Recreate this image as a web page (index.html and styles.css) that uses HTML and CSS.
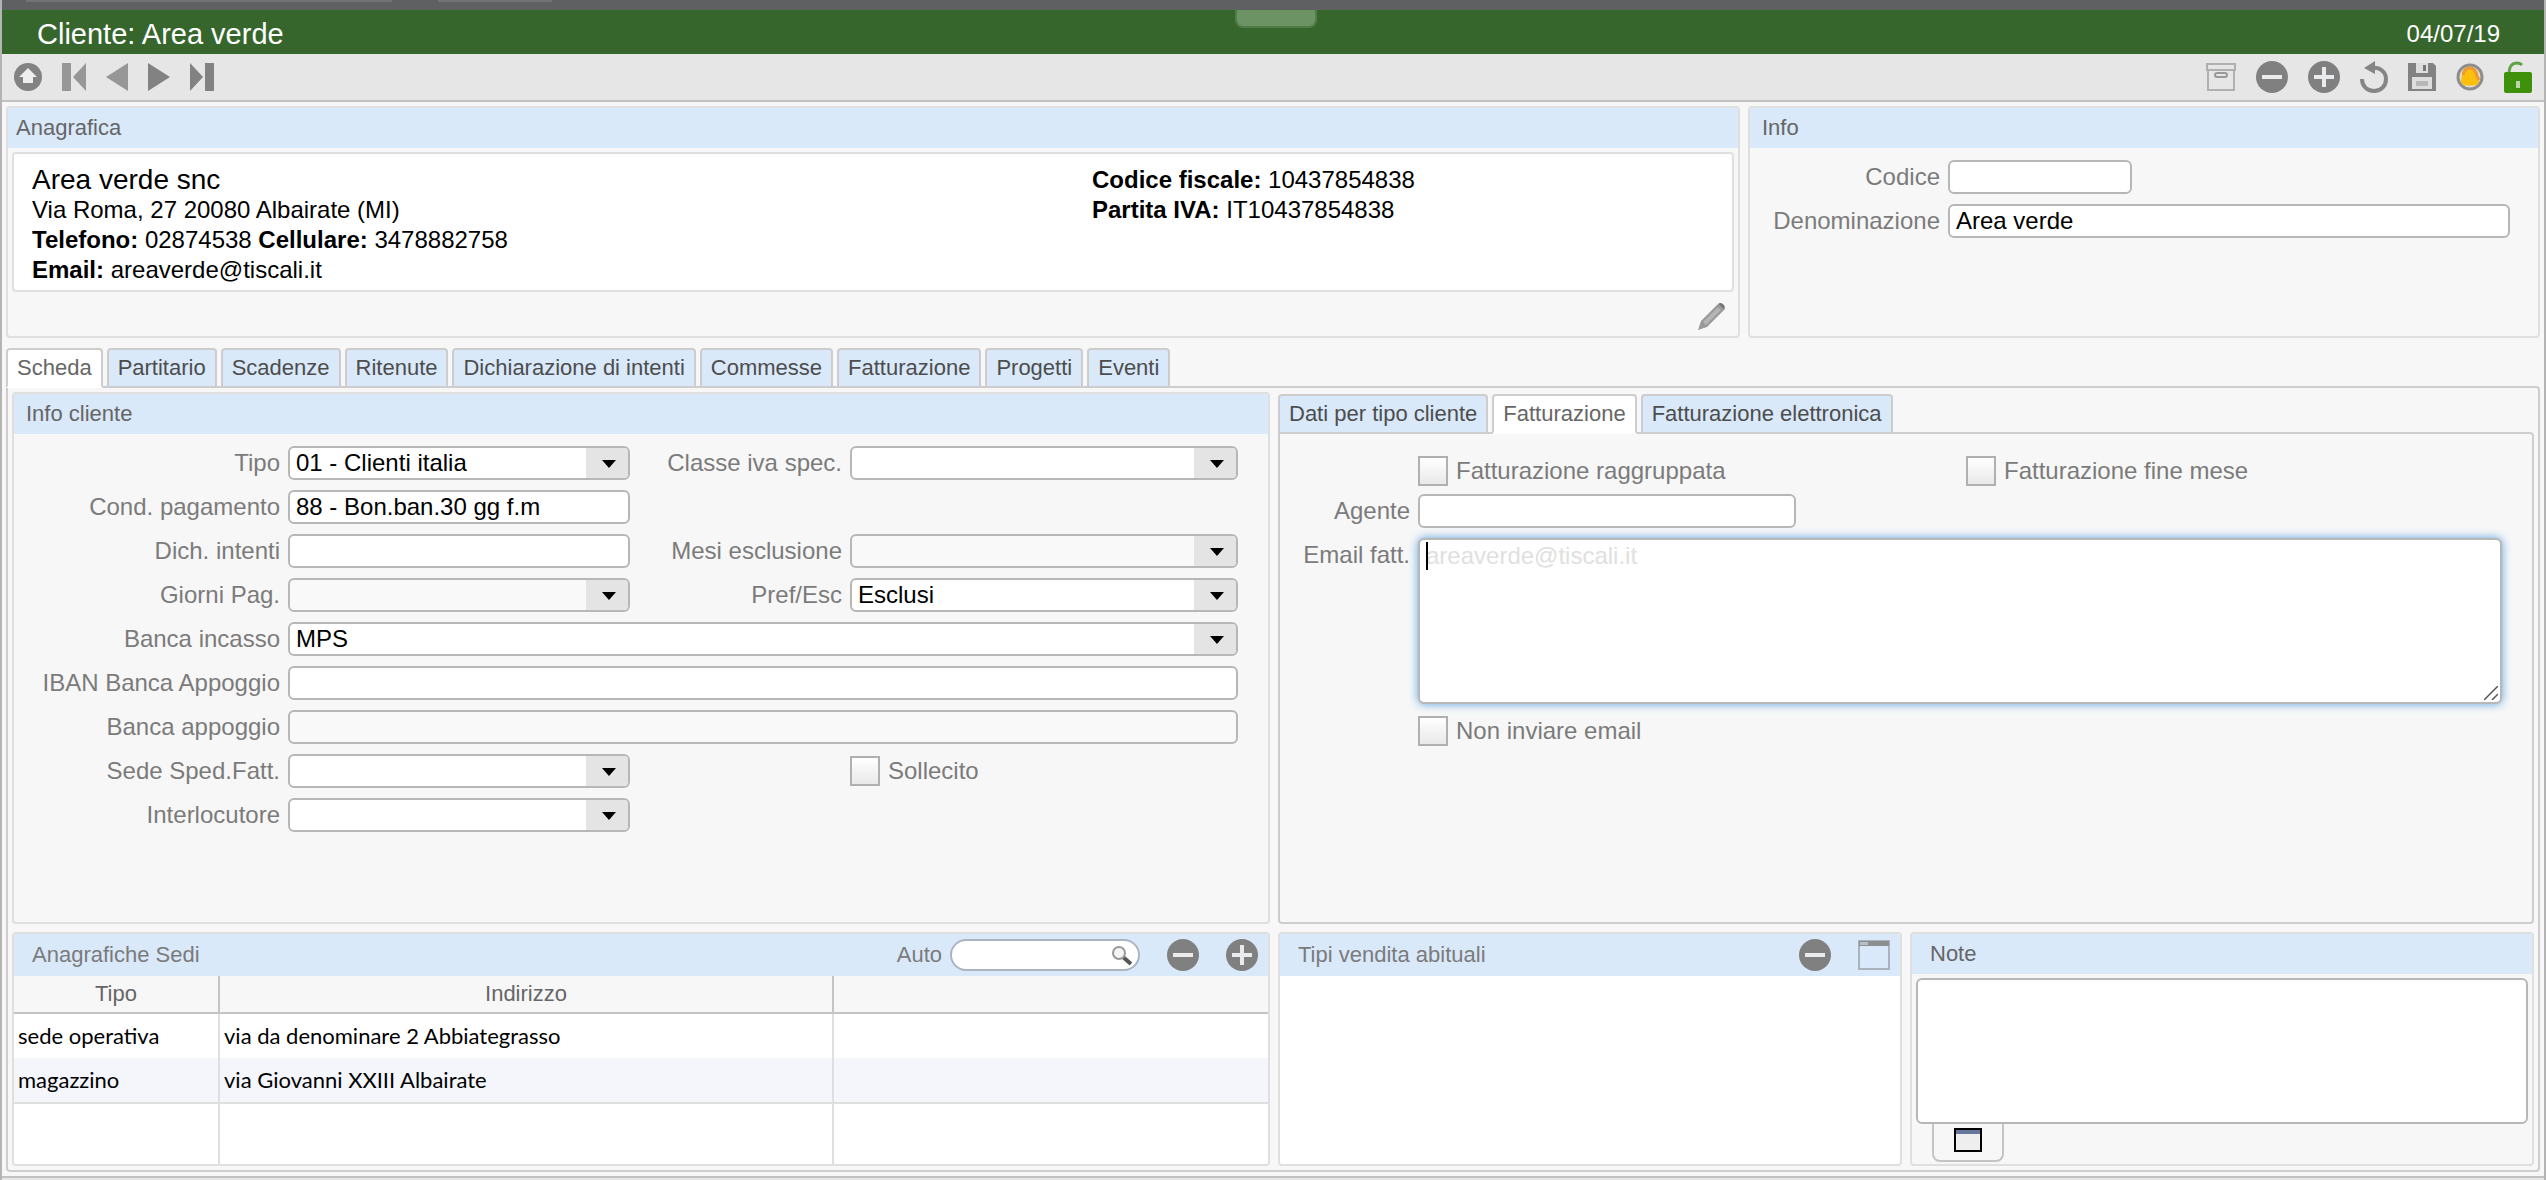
FILE: index.html
```html
<!DOCTYPE html>
<html lang="it">
<head>
    <meta charset="UTF-8">
    <meta name="viewport" content="width=device-width, initial-scale=1.0">
    <title>Cliente: Area verde</title>
    <link rel="stylesheet" href="styles.css">
</head>
<body>
    <!-- simboli riutilizzati -->
    <svg class="symbols" aria-hidden="true">
        <symbol id="minus" viewBox="0 0 32 32">
            <circle cx="16" cy="16" r="16" fill="#808080"/>
            <path d="M6 14h20v4H6z" fill="#e8eaec"/>
        </symbol>
        <symbol id="plus" viewBox="0 0 32 32">
            <circle cx="16" cy="16" r="16" fill="#808080"/>
            <path d="M6 14h8V6h4v8h8v4h-8v8h-4v-8H6z" fill="#e8eaec"/>
        </symbol>
    </svg>

    <div class="strip"><span></span><span></span></div>
    <header class="title-bar">
        <h1>Cliente: Area verde</h1>
        <span class="notch"></span>
        <span class="date">04/07/19</span>
    </header>

    <nav class="toolbar">
        <button aria-label="Su"><svg width="28" height="28" viewBox="0 0 28 28"><circle cx="14" cy="14" r="14" fill="#828282"/><path d="M14 5l9 9h-4v6H9v-6H5z" fill="#eee"/></svg></button>
        <button aria-label="Primo"><svg width="24" height="28" viewBox="0 0 24 28" fill="#979797"><path d="M0 0h9v28H0zM24 0v28L11 14z"/></svg></button>
        <button aria-label="Precedente"><svg width="22" height="28" viewBox="0 0 22 28" fill="#979797"><path d="M22 0v28L0 14z"/></svg></button>
        <button aria-label="Successivo"><svg width="22" height="28" viewBox="0 0 22 28" fill="#828282"><path d="M0 0l22 14L0 28z"/></svg></button>
        <button aria-label="Ultimo"><svg width="24" height="28" viewBox="0 0 24 28" fill="#828282"><path d="M15 0h9v28h-9zM0 0l13 14L0 28z"/></svg></button>
        <div class="actions">
            <button aria-label="Archivia"><svg width="30" height="30" viewBox="0 0 30 30" fill="none" stroke="#b0b0b0" stroke-width="2"><path d="M1 2h28v6H1zM2 8v20h26V8"/><rect x="9" y="11" width="12" height="4" rx="2" stroke="#999"/></svg></button>
            <button aria-label="Elimina"><svg width="32" height="32"><use href="#minus"/></svg></button>
            <button aria-label="Nuovo"><svg width="32" height="32"><use href="#plus"/></svg></button>
            <button aria-label="Annulla"><svg width="28" height="32" viewBox="0 0 28 32"><path d="M12 7c8-1 14 4 14 11s-5 12-12 12S2 25 2 18" fill="none" stroke="#858585" stroke-width="4"/><path d="M4 7l11-7v13z" fill="#858585"/></svg></button>
            <button aria-label="Salva"><svg width="28" height="28" viewBox="0 0 28 28"><path d="M0 0h25l3 3v25H0z" fill="#828282"/><path d="M8 0h12v10H8zM4 14h20v12H4z" fill="#dedede"/><path d="M8 18h12v5H8z" fill="#b8b8b8"/><path d="M15 2h3v6h-3z" fill="#777"/></svg></button>
            <button aria-label="Notifiche"><svg width="28" height="28" viewBox="0 0 28 28"><circle cx="14" cy="14" r="12" fill="#e6dccb" stroke="#8e8e8e" stroke-width="3"/><path d="M6 21c-2-3 0-6 0-10 1-5 4-7 8-7s7 3 8 7c0 4 2 7 0 10-2 2-14 2-16 0z" fill="#fbbf0c"/><path d="M7 12c1-5 3-7 7-7s6 3 7 8l2 4" fill="none" stroke="#ec9a35" stroke-width="3"/></svg></button>
            <button aria-label="Sblocca"><svg width="28" height="32" viewBox="0 0 28 32"><path d="M5 12c0-6 3-10 8-10 2 0 4 1 5 2" fill="none" stroke="#5fa345" stroke-width="3"/><rect y="11" width="28" height="21" rx="2" fill="#3f900a"/><path d="M12 20h4v7h-4z" fill="#b9d7a8"/></svg></button>
        </div>
    </nav>

    <main>
        <div class="top-row">
            <section class="panel registry">
                <h2>Anagrafica</h2>
                <div class="card">
                    <div>
                        <p class="name">Area verde snc</p>
                        <p>Via Roma, 27 20080 Albairate (MI)</p>
                        <p><b>Telefono:</b> 02874538 <b>Cellulare:</b> 3478882758</p>
                        <p><b>Email:</b> areaverde@tiscali.it</p>
                    </div>
                    <div>
                        <p><b>Codice fiscale:</b> 10437854838</p>
                        <p><b>Partita IVA:</b> IT10437854838</p>
                    </div>
                </div>
                <button class="edit" aria-label="Modifica"><svg width="28" height="28" viewBox="0 0 28 28"><path d="M0 28l3-9L20 2l6 6L9 25z" fill="#999"/><path d="M5 20L20 5l3 3L8 23z" fill="#b4b4b4"/><path d="M20 2c3-3 9 2 6 6z" fill="#777"/></svg></button>
            </section>

            <section class="panel">
                <h2 class="indent">Info</h2>
                <div class="form info-form">
                    <label for="codice">Codice</label>
                    <input type="text" id="codice" class="short">
                    <label for="denominazione">Denominazione</label>
                    <input type="text" id="denominazione" value="Area verde">
                </div>
            </section>
        </div>

        <div class="tabs">
            <button class="active">Scheda</button>
            <button>Partitario</button>
            <button>Scadenze</button>
            <button>Ritenute</button>
            <button>Dichiarazione di intenti</button>
            <button>Commesse</button>
            <button>Fatturazione</button>
            <button>Progetti</button>
            <button>Eventi</button>
        </div>

        <div class="tab-page">
            <div class="middle-row">
                <section class="panel">
                    <h2 class="indent">Info cliente</h2>
                    <div class="form client-form">
                        <label for="tipo">Tipo</label>
                        <span class="select"><select id="tipo"><option>01 - Clienti italia</option></select></span>
                        <label for="classe">Classe iva spec.</label>
                        <span class="select"><select id="classe"><option></option></select></span>

                        <label for="cond">Cond. pagamento</label>
                        <input type="text" id="cond" value="88 - Bon.ban.30 gg f.m">

                        <label for="dich" class="first">Dich. intenti</label>
                        <input type="text" id="dich">
                        <label for="mesi">Mesi esclusione</label>
                        <span class="select"><select id="mesi" class="off"><option></option></select></span>

                        <label for="giorni">Giorni Pag.</label>
                        <span class="select"><select id="giorni" class="off"><option></option></select></span>
                        <label for="pref">Pref/Esc</label>
                        <span class="select"><select id="pref"><option>Esclusi</option></select></span>

                        <label for="incasso">Banca incasso</label>
                        <span class="select wide"><select id="incasso"><option>MPS</option></select></span>

                        <label for="iban">IBAN Banca Appoggio</label>
                        <input type="text" id="iban" class="wide">

                        <label for="appoggio">Banca appoggio</label>
                        <input type="text" id="appoggio" class="wide off" readonly>

                        <label for="sede">Sede Sped.Fatt.</label>
                        <span class="select"><select id="sede"><option></option></select></span>
                        <label class="check reminder"><input type="checkbox">Sollecito</label>

                        <label for="interlocutore" class="first">Interlocutore</label>
                        <span class="select"><select id="interlocutore"><option></option></select></span>
                    </div>
                </section>

                <section class="billing">
                    <div class="tabs">
                        <button>Dati per tipo cliente</button>
                        <button class="active">Fatturazione</button>
                        <button>Fatturazione elettronica</button>
                    </div>
                    <div class="billing-page">
                        <div class="form billing-form">
                            <div class="checks">
                                <label class="check"><input type="checkbox">Fatturazione raggruppata</label>
                                <label class="check"><input type="checkbox">Fatturazione fine mese</label>
                            </div>
                            <label for="agente">Agente</label>
                            <input type="text" id="agente" class="agent">
                            <label for="email">Email fatt.</label>
                            <div class="email-box">
                                <textarea id="email" placeholder="areaverde@tiscali.it"></textarea>
                                <svg class="grip" width="14" height="14" viewBox="0 0 14 14" stroke="#555" stroke-width="1.500"><path d="M0 14L14 0M8 14l6-6"/></svg>
                            </div>
                            <div class="checks">
                                <label class="check"><input type="checkbox">Non inviare email</label>
                            </div>
                        </div>
                    </div>
                </section>
            </div>

            <div class="bottom-row">
                <section class="panel">
                    <div class="list-head">
                        <h2>Anagrafiche Sedi</h2>
                        <label for="cerca">Auto</label>
                        <span class="search">
                            <input type="text" id="cerca">
                            <svg width="20" height="20" viewBox="0 0 20 20"><path d="M11 11l8 7" stroke="#555" stroke-width="4"/><circle cx="7" cy="7" r="6" fill="#f4f4f4" stroke="#999" stroke-width="2"/></svg>
                        </span>
                        <button aria-label="Rimuovi sede"><svg width="32" height="32"><use href="#minus"/></svg></button>
                        <button aria-label="Aggiungi sede"><svg width="32" height="32"><use href="#plus"/></svg></button>
                    </div>
                    <table>
                        <thead>
                            <tr><th class="col-type">Tipo</th><th class="col-address">Indirizzo</th><th></th></tr>
                        </thead>
                        <tbody>
                            <tr><td>sede operativa</td><td>via da denominare 2 Abbiategrasso</td><td></td></tr>
                            <tr class="last"><td>magazzino</td><td>via Giovanni XXIII Albairate</td><td></td></tr>
                            <tr class="filler"><td></td><td></td><td></td></tr>
                        </tbody>
                    </table>
                </section>

                <section class="panel white">
                    <div class="list-head">
                        <h2>Tipi vendita abituali</h2>
                        <button aria-label="Rimuovi tipo"><svg width="32" height="32"><use href="#minus"/></svg></button>
                        <button aria-label="Apri elenco"><svg width="32" height="30" viewBox="0 0 32 30"><path d="M1 1h30v28H1z" fill="none" stroke="#a9b3bd" stroke-width="2"/><path d="M1 1h30v5H1z" fill="#8c8f90"/><path d="M2 2h8v3H2z" fill="#b9bfc4"/></svg></button>
                    </div>
                </section>

                <section class="panel notes">
                    <h2 class="wide-indent">Note</h2>
                    <textarea aria-label="Note"></textarea>
                    <button class="expand" aria-label="Espandi note"><svg width="28" height="24" viewBox="0 0 28 24"><path d="M1 1h26v22H1z" fill="#eee" stroke="#000" stroke-width="2"/><path d="M2 2h24v4H2z" fill="#66779b"/></svg></button>
                </section>
            </div>
        </div>
    </main>
    <footer></footer>
</body>
</html>
```
FILE: styles.css
```css
*{
    box-sizing: border-box;
    margin: 0;
    padding: 0;
}
body{
    display: flex;
    flex-direction: column;
    min-height: 100vh;
    border: solid #b4b4b4;
    border-width: 0 2px;
    background-color: #f7f7f7;
    color: #666;
    font: 24px/30px "Liberation Sans", Arial, sans-serif;
}
button, input, select, textarea{
    font: inherit;
    color: #000;
}
button{
    border: 0;
    background: none;
}
svg{
    display: block;
}
.symbols{
    position: absolute;
    width: 0;
    height: 0;
}

/* header */
.strip{
    display: flex;
    gap: 46px;
    height: 10px;
    padding-left: 24px;
    background-color: #5f6062;
}
.strip span{
    width: 366px;
    height: 2px;
    background-color: #727375;
}
.strip span:last-child{
    width: 114px;
}
.title-bar{
    position: relative;
    display: flex;
    align-items: center;
    justify-content: space-between;
    height: 44px;
    padding: 4px 44px 0 35px;
    background-color: #36662c;
    color: #fff;
}
.title-bar h1{
    font-size: 29px;
    font-weight: normal;
}
.notch{
    position: absolute;
    top: 0;
    left: calc(50% - 38px);
    width: 82px;
    height: 18px;
    border: 2px solid #507c48;
    border-top: 0;
    border-radius: 0 0 8px 8px;
    background-color: #6b9364;
}
.toolbar{
    display: flex;
    align-items: center;
    gap: 20px;
    height: 48px;
    padding: 0 12px;
    border-bottom: 2px solid #c1c1c1;
    background-color: #e6e6e6;
}
.actions{
    display: flex;
    align-items: center;
    gap: 20px;
    margin-left: auto;
}

/* panels */
main{
    display: flex;
    flex: 1;
    flex-direction: column;
    padding: 4px;
}
.panel{
    display: flex;
    flex-direction: column;
    overflow: hidden;
    border: 2px solid #dfdfdf;
    border-radius: 4px;
}
.white{
    background-color: #fff;
}
.panel h2{
    font-size: 22px;
    font-weight: normal;
    line-height: 40px;
    padding-left: 8px;
    background-color: #d9e9fa;
}
.panel .indent{
    padding-left: 12px;
}
.panel .wide-indent{
    padding-left: 18px;
}
.top-row{
    display: grid;
    grid-template-columns: 1734fr 792fr;
    gap: 8px;
    min-height: 232px;
}
.card{
    display: grid;
    grid-template-columns: 1060fr 640fr;
    margin: 4px 4px 10px;
    padding: 11px 0 5px 18px;
    border: 2px solid #dfdfdf;
    border-radius: 4px;
    background-color: #fff;
    color: #000;
}
.card .name{
    font-size: 28px;
}
.edit{
    align-self: flex-end;
    margin-right: 12px;
}

/* tabs */
.tabs{
    position: relative;
    z-index: 1;
    display: flex;
    gap: 4px;
    margin: 10px 0 -2px;
}
.tabs button{
    height: 40px;
    padding: 0 9px;
    border: 2px solid #cdcdcd;
    border-radius: 4px 4px 0 0;
    background-color: #d9e9fa;
    color: #4d4d4d;
    font-size: 22px;
}
.tabs .active{
    border-bottom-color: #fff;
    background-color: #fff;
    color: #666;
}
.tab-page{
    display: flex;
    flex: 1;
    flex-direction: column;
    gap: 8px;
    padding: 4px;
    border: 2px solid #cdcdcd;
    border-radius: 0 4px 4px 4px;
}
.middle-row{
    display: grid;
    flex: 1;
    grid-template-columns: 1258fr 1256fr;
    gap: 8px;
}
.billing{
    display: flex;
    flex-direction: column;
}
.billing .tabs{
    margin-top: 2px;
}
.billing-page{
    flex: 1;
    padding: 20px 30px 0 0;
    border: 2px solid #cdcdcd;
    border-radius: 0 4px 4px 4px;
}

/* forms */
.form{
    display: grid;
    gap: 10px 8px;
    color: #7b7b7b;
}
.form > label{
    line-height: 34px;
    text-align: right;
    white-space: nowrap;
}
.info-form{
    grid-template-columns: 190px 1fr;
    padding: 12px 28px 0 0;
}
.client-form{
    grid-template-columns: 266px 342fr 204px 388fr;
    padding: 12px 30px 0 0;
}
.billing-form{
    grid-template-columns: 130px 1fr;
}
.first{
    grid-column: 1;
}
.wide{
    grid-column: 2 / 5;
}
.form input[type="text"], select{
    width: 100%;
    height: 34px;
    padding: 0 6px;
    border: 2px solid #b7b7b7;
    border-radius: 6px;
    background-color: #fff;
}
.form input.short{
    width: 184px;
}
.form input.agent{
    width: 378px;
}
.form input.off, .form select.off{
    background-color: #f9f9f9;
}
.select{
    position: relative;
}
select{
    display: block;
    appearance: none;
}
/* grey button and arrow of the drop-down */
.select::before{
    content: "";
    position: absolute;
    top: 2px;
    right: 2px;
    width: 42px;
    height: 30px;
    border-radius: 0 4px 4px 0;
    background-color: #e4e4e4;
    pointer-events: none;
    z-index: 1;
}
.select::after{
    content: "";
    position: absolute;
    top: 14px;
    right: 14px;
    border: 7px solid transparent;
    border-top: 8px solid #000;
    border-bottom: 0;
    pointer-events: none;
    z-index: 1;
}
.form > .check, .check{
    display: flex;
    align-items: center;
    gap: 8px;
    line-height: 30px;
}
.check input{
    appearance: none;
    width: 30px;
    height: 30px;
    border: 2px solid #b0b0b0;
    background: linear-gradient(#fff, #e9e9e9);
}
.reminder{
    grid-column: 4;
}
.checks{
    grid-column: 2;
    display: grid;
    grid-template-columns: 548fr 536fr;
    margin: 2px 0 -2px;
}
textarea{
    display: block;
    resize: none;
    width: 100%;
    border: 2px solid #b7b7b7;
    border-radius: 6px;
    background-color: #fff;
}
.email-box{
    position: relative;
}
.email-box textarea{
    height: 166px;
    padding: 1px 6px;
    box-shadow: 0 0 10px #5ba0e0;
}
.email-box textarea::placeholder{
    color: #e0e0e0;
}
/* text cursor */
.email-box::before{
    content: "";
    position: absolute;
    top: 4px;
    left: 8px;
    width: 2px;
    height: 28px;
    background-color: #000;
}
.grip{
    position: absolute;
    right: 4px;
    bottom: 4px;
}

/* lists */
.bottom-row{
    display: grid;
    grid-template-columns: 1258fr 624fr 624fr;
    gap: 8px;
    min-height: 234px;
}
.list-head{
    display: flex;
    flex-shrink: 0;
    align-items: center;
    height: 42px;
    padding: 0 10px 0 18px;
    background-color: #d9e9fa;
    color: #7b7b7b;
    font-size: 22px;
}
.list-head h2{
    margin-right: auto;
    padding: 0;
}
.list-head button{
    margin-left: 27px;
}
.search{
    position: relative;
    margin-left: 8px;
}
.search input{
    display: block;
    width: 190px;
    height: 32px;
    padding: 0 36px 0 14px;
    border: 2px solid #acb3c1;
    border-radius: 16px;
    background-color: #fff;
}
.search svg{
    position: absolute;
    top: 7px;
    right: 8px;
}
table{
    flex: 1;
    width: 100%;
    border-spacing: 0;
    table-layout: fixed;
    font-size: 22px;
}
th{
    height: 38px;
    border-right: 2px solid #c4c4c4;
    border-bottom: 2px solid #c4c4c4;
    font-weight: normal;
}
.col-type{
    width: 206px;
}
.col-address{
    width: 614px;
}
td{
    height: 44px;
    padding: 0 4px;
    border-right: 2px solid #dfdfdf;
    background-color: #fff;
    color: #000;
    font-family: Lato, "Liberation Sans", sans-serif;
}
th:last-child, td:last-child{
    border-right: 0;
}
.last td{
    height: 46px;
    border-bottom: 2px solid #dfdfdf;
    background-color: #f4f6fb;
}
.filler td{
    height: 60px;
}
.notes textarea{
    flex: 1;
    width: auto;
    margin: 4px 4px 0;
}
.expand{
    width: 72px;
    height: 38px;
    margin: 0 0 2px 20px;
    padding: 4px 20px 0;
    border: 2px solid #c4c4c4;
    border-top: 0;
    border-radius: 0 0 8px 8px;
}
.expand svg{
    margin-bottom: 8px;
}

footer{
    height: 4px;
    border-top: 2px solid #c1c1c1;
    background-color: #e6e6e6;
}
```
